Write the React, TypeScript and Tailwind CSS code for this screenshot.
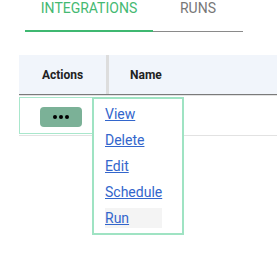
export default function App() {
  const items = ["View", "Delete", "Edit", "Schedule", "Run"];

  return (
    <div className="relative h-[256px] w-[277px] overflow-hidden bg-white font-['Roboto',sans-serif]">
      {/* tabs */}
      <div className="ml-[25px] flex h-[32px]">
        <div className="flex h-[32px] w-[128px] justify-center border-b-2 border-[#3fb871] text-[14px] leading-[16px] text-[#45b972]">
          INTEGRATIONS
        </div>
        <div className="flex h-[32px] w-[90px] justify-center border-b border-[#8a8a8a] text-[14px] leading-[16px] text-[#777777]">
          RUNS
        </div>
      </div>

      {/* table */}
      <div className="ml-[19px] mt-[23px]">
        <div className="flex h-[40px] border-b border-[#7a7a7a] bg-[#f1f5fb] text-[12px] font-bold text-[#222222]">
          <div className="flex w-[87px] items-center justify-center">Actions</div>
          <div className="w-[3px] bg-[#dddddd]" />
          <div className="flex items-center pl-[21px]">Name</div>
        </div>

        <div className="relative h-[41px] border-y border-[#e2e2e2]">
          <div className="mt-[1px] flex h-[37px] w-[87px] items-start border border-[#a9e7cc] pl-[20px] pt-[9px]">
            <button className="flex h-[20px] w-[42px] items-center justify-center gap-[2px] rounded-[4px] bg-[#7bb197]">
              <span className="h-[4px] w-[4px] rounded-full bg-black" />
              <span className="h-[4px] w-[4px] rounded-full bg-black" />
              <span className="h-[4px] w-[4px] rounded-full bg-black" />
            </button>
          </div>

          {/* actions menu */}
          <div className="absolute left-[73px] top-[1px] flex w-[92px] items-start border-2 border-[#9fe3c3] bg-white pb-[5px] pl-[11px] pt-[5px]">
            <div className="flex flex-col gap-[6px]">
              {items.map((label) => (
                <a
                  key={label}
                  href="#"
                  className={
                    "block text-[14px] leading-[20px] text-[#3366cc] underline " +
                    (label === "Run" ? "bg-[#f4f4f4]" : "")
                  }
                >
                  {label}
                </a>
              ))}
            </div>
          </div>
        </div>
      </div>
    </div>
  );
}
